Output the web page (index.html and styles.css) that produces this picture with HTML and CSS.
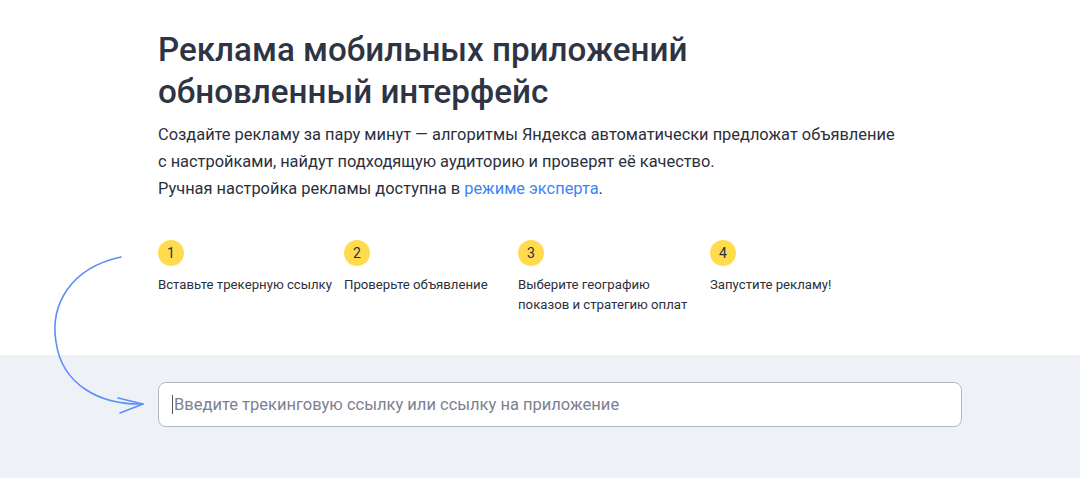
FILE: index.html
```html
<!DOCTYPE html>
<html lang="ru">
<head>
<meta charset="utf-8">
<link rel="stylesheet" href="styles.css">
</head>
<body>
<div class="page">
  <section class="intro">
    <h1 class="title">Реклама мобильных приложений<br>обновленный интерфейс</h1>
    <p class="lead">Создайте рекламу за пару минут — алгоритмы Яндекса автоматически предложат объявление<br>с настройками, найдут подходящую аудиторию и проверят её качество.<br>Ручная настройка рекламы доступна в <a class="link" href="#">режиме эксперта</a>.</p>
    <ol class="steps">
      <li class="step"><span class="num">1</span><span class="label">Вставьте трекерную ссылку</span></li>
      <li class="step"><span class="num">2</span><span class="label">Проверьте объявление</span></li>
      <li class="step"><span class="num">3</span><span class="label">Выберите географию<br>показов и стратегию оплат</span></li>
      <li class="step"><span class="num">4</span><span class="label">Запустите рекламу!</span></li>
    </ol>
  </section>
  <section class="band">
    <div class="field"><span class="caret"></span><span class="placeholder">Введите трекинговую ссылку или ссылку на приложение</span></div>
  </section>
  <svg class="arrow" width="160" height="180" viewBox="40 245 160 180" xmlns="http://www.w3.org/2000/svg">
    <path d="M121 257 C 70 268, 50 305, 56 342 C 62 385, 100 405, 143 404" fill="none" stroke="#5b8ff9" stroke-width="1.6" stroke-linecap="round"/>
    <path d="M118 398 L 143 404 L 120 413" fill="none" stroke="#5b8ff9" stroke-width="1.6" stroke-linecap="round" stroke-linejoin="round"/>
  </svg>
</div>
</body>
</html>
```
FILE: styles.css
```css
* { box-sizing: border-box; }
html, body { margin: 0; padding: 0; background: #fff; }
body {
  font-family: Roboto, "Liberation Sans", Arial, sans-serif;
  color: #2b303c;
  width: 1080px;
  height: 478px;
  overflow: hidden;
}
.page { position: relative; height: 478px; display: flex; flex-direction: column; }
.intro { padding: 29px 0 0 158px; height: 355px; }
.title {
  margin: 0;
  font-size: 33.2px;
  line-height: 42px;
  font-weight: 500;
  color: #2e3444;
}
.lead {
  margin: 8px 0 0;
  font-size: 16.4px;
  line-height: 27px;
  color: #2b303c;
}
.link { color: #3d85f5; text-decoration: none; }
.steps {
  list-style: none;
  margin: 38px 0 0;
  padding: 0;
  display: grid;
  grid-template-columns: 186px 174px 192px auto;
}
.step { display: flex; flex-direction: column; align-items: flex-start; }
.num {
  width: 26px; height: 26px;
  border-radius: 50%;
  background: #ffdb4d;
  display: flex; align-items: center; justify-content: center;
  font-size: 14px;
  color: #2b303c;
}
.label {
  margin-top: 9px;
  font-size: 13.2px;
  line-height: 20px;
  color: #2b303c;
}
.band {
  flex: 1;
  background: #eef1f6;
  padding: 27px 118px 0 158px;
}
.field {
  height: 45px;
  background: #fff;
  border: 1px solid #b3b8c4;
  border-radius: 8px;
  display: flex;
  align-items: center;
  padding-left: 13px;
}
.caret { width: 1px; height: 19px; background: #555; margin-right: 1px; }
.placeholder { font-size: 16.5px; color: #7c8190; }
.arrow { position: absolute; left: 40px; top: 245px; }
```
